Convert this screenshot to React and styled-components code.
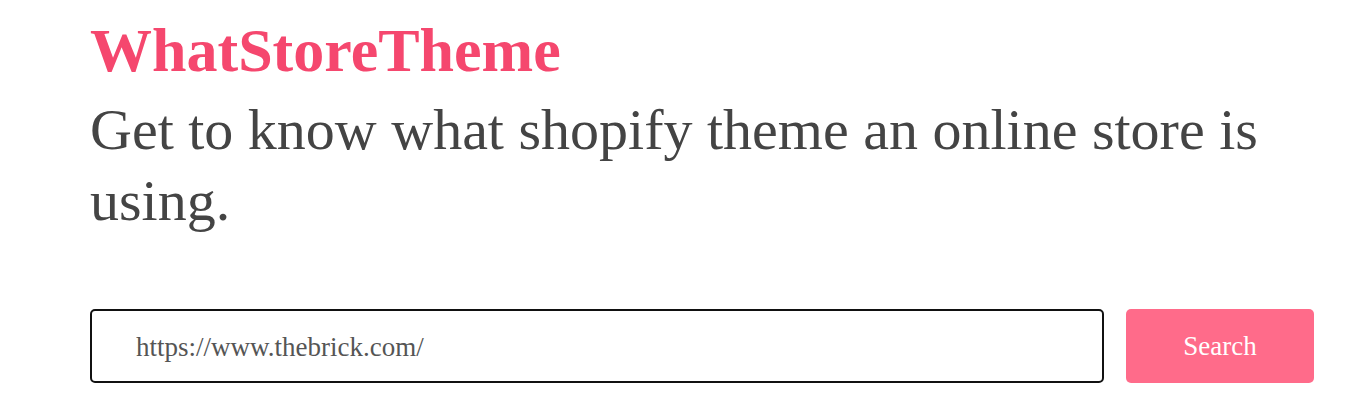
import React from 'react'
import styled, { createGlobalStyle } from 'styled-components'

const GlobalStyle = createGlobalStyle`
  body {
    margin: 0;
    background: #ffffff;
    font-family: "Liberation Serif", "Times New Roman", serif;
  }
`

const Container = styled.div`
  width: 1224px;
  padding: 14px 0 0 90px;
`

const Title = styled.h1`
  margin: 0 0 8px;
  font-size: 62px;
  font-weight: 700;
  line-height: 72px;
  color: #f5476e;
`

const Subtitle = styled.h2`
  margin: 0;
  font-size: 58px;
  font-weight: 400;
  line-height: 71px;
  color: #444444;
`

const Form = styled.form`
  display: flex;
  gap: 22px;
  margin-top: 73px;
`

const Input = styled.input`
  flex: 1;
  height: 74px;
  box-sizing: border-box;
  padding: 2px 44px 0;
  border: 2px solid #111111;
  border-radius: 5px;
  font-family: inherit;
  font-size: 27px;
  color: #555555;
  outline: none;
`

const Button = styled.button`
  width: 188px;
  height: 74px;
  border: none;
  border-radius: 5px;
  background-color: #ff6b8a;
  color: #ffffff;
  font-family: inherit;
  font-size: 27px;
  cursor: pointer;
`

const App = () => {
  return (
    <Container>
      <GlobalStyle />
      <Title>WhatStoreTheme</Title>
      <Subtitle>Get to know what shopify theme an online store is using.</Subtitle>
      <Form onSubmit={(e) => e.preventDefault()}>
        <Input defaultValue='https://www.thebrick.com/' />
        <Button type='submit'>Search</Button>
      </Form>
    </Container>
  )
}

export default App
